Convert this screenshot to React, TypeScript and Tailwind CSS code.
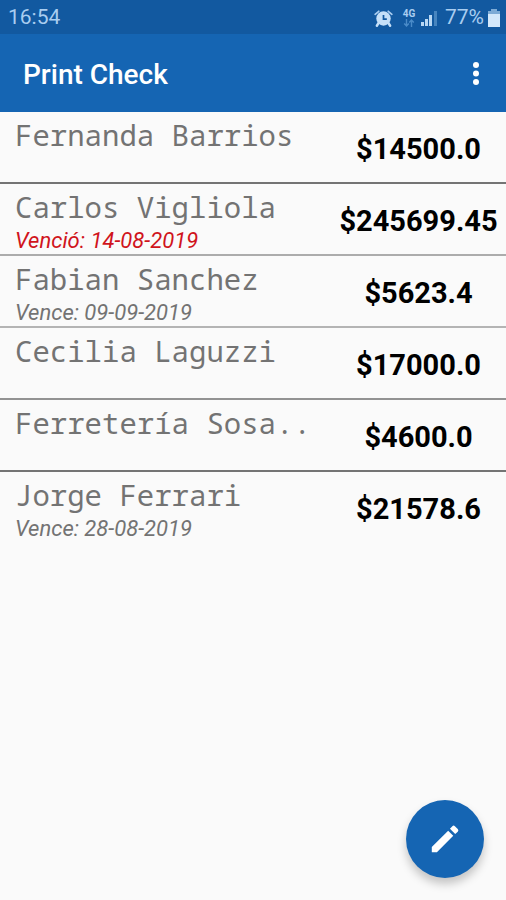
import React from 'react';
import clsx from 'clsx';

interface Check {
  name: string;
  amount: string;
  due?: string;
  expired?: boolean;
  line?: string;
}

const checks: Check[] = [
  { name: 'Fernanda Barrios', amount: '$14500.0', line: 'border-[#747474]' },
  { name: 'Carlos Vigliola', amount: '$245699.45', due: 'Venció: 14-08-2019', expired: true, line: 'border-[#acacac]' },
  { name: 'Fabian Sanchez', amount: '$5623.4', due: 'Vence: 09-09-2019', line: 'border-[#b4b4b4]' },
  { name: 'Cecilia Laguzzi', amount: '$17000.0', line: 'border-[#929292]' },
  { name: 'Ferretería Sosa..', amount: '$4600.0', line: 'border-[#747474]' },
  { name: 'Jorge Ferrari', amount: '$21578.6', due: 'Vence: 28-08-2019', line: 'border-transparent' },
];

const StatusBar: React.FC = () => (
  <div className="flex h-[34px] items-center justify-between bg-[#1259a0] pl-2 pr-[6px] pt-[2px] text-[21px] text-[#a9cdf0]">
    <span>16:54</span>
    <div className="flex items-center">
      <svg className="mr-2 h-[19px] w-[19px]" viewBox="0 0 20 20" aria-hidden="true">
        <path d="M5 14.5 3 17.6M15 14.5 17 17.6" stroke="#c6e0f8" strokeWidth="2.6" strokeLinecap="round" />
        <path d="M1.2 5.6 5 2.4M18.8 5.6 15 2.4" stroke="#a9cdf0" strokeWidth="1.8" strokeLinecap="round" />
        <circle cx="10" cy="10" r="7.6" fill="#c6e0f8" />
        <path d="M10 6.2v4.4h3.5" fill="none" stroke="#1259a0" strokeWidth="1.8" />
      </svg>
      <div className="mr-1 flex w-4 flex-col items-center">
        <span className="text-[10px] font-bold leading-[10px]">4G</span>
        <svg className="h-2 w-3" viewBox="0 0 12 8" fill="none" stroke="#4a8bc8" strokeWidth="1.4" aria-hidden="true">
          <path d="M3.5 0v7M1.2 4.5 3.5 7l2.3-2.5M8.5 8V1M6.2 3.5 8.5 1l2.3 2.5" />
        </svg>
      </div>
      <svg className="mr-2 h-4 w-4" viewBox="0 0 16 16" aria-hidden="true">
        <path d="M0 12h3v4H0zM4 9h3v7H4zM8 5h3v11H8z" fill="#b9d8f4" />
        <path d="M13 1h3v15h-3z" fill="#4785bf" />
      </svg>
      <span className="mr-1">77%</span>
      <svg className="h-[18px] w-3" viewBox="0 0 12 18" aria-hidden="true">
        <path d="M3 0h6v2h3v4H0V2h3z" fill="#7dabd6" />
        <path d="M0 5h12v13H0z" fill="#d3e8fb" />
      </svg>
    </div>
  </div>
);

const AppBar: React.FC = () => (
  <header className="flex h-[78px] items-center justify-between bg-[#1565b3] pl-[23px] pr-4 text-white">
    <h1 className="mt-1 text-[28px] font-medium">Print Check</h1>
    <button type="button" aria-label="Menu" className="flex h-10 w-7 items-center justify-center">
      <svg className="h-6 w-6" viewBox="0 0 24 24" fill="currentColor" aria-hidden="true">
        <circle cx="12" cy="4" r="3" />
        <circle cx="12" cy="12.5" r="3" />
        <circle cx="12" cy="21" r="3" />
      </svg>
    </button>
  </header>
);

const CheckRow: React.FC<{ check: Check }> = ({ check }) => (
  <li className={clsx('flex h-[72px] border-b-2 pl-[15px]', check.line)}>
    <div className="min-w-0 flex-1 pt-1">
      <p className="whitespace-nowrap font-['Droid_Sans_Mono','Noto_Sans_Mono','DejaVu_Sans_Mono',monospace] text-[29px] leading-[38px] text-[#737373]">
        {check.name}
      </p>
      {check.due && (
        <p className={clsx('text-[22px] italic leading-[30px]', check.expired ? 'text-[#d0141c]' : 'text-[#737373]')}>
          {check.due}
        </p>
      )}
    </div>
    <p className="flex w-[175px] shrink-0 items-center justify-center pt-[6px] text-[29px] font-bold text-black">
      {check.amount}
    </p>
  </li>
);

const App: React.FC = () => {
  return (
    <div className="min-h-screen bg-[#fafafa] font-[Roboto,sans-serif]">
      <StatusBar />
      <AppBar />
      <main>
        <ul>
          {checks.map((check) => (
            <CheckRow key={check.name} check={check} />
          ))}
        </ul>
      </main>
      <button
        type="button"
        aria-label="Editar"
        className="fixed bottom-[22px] right-[22px] flex h-[78px] w-[78px] items-center justify-center rounded-full bg-[#1565b3] text-white shadow-[0_6px_10px_rgba(0,0,0,0.22)]"
      >
        <svg className="h-9 w-9" viewBox="0 0 24 24" fill="currentColor" aria-hidden="true">
          <path d="M3.2 17.4V20.8h3.4L17.5 9.9l-3.4-3.4L3.2 17.4zM20.5 7.1a1.2 1.2 0 0 0 0-1.7l-1.9-1.9a1.2 1.2 0 0 0-1.7 0l-1.6 1.7 3.5 3.5 1.7-1.6z" />
        </svg>
      </button>
    </div>
  );
};

export default App;
